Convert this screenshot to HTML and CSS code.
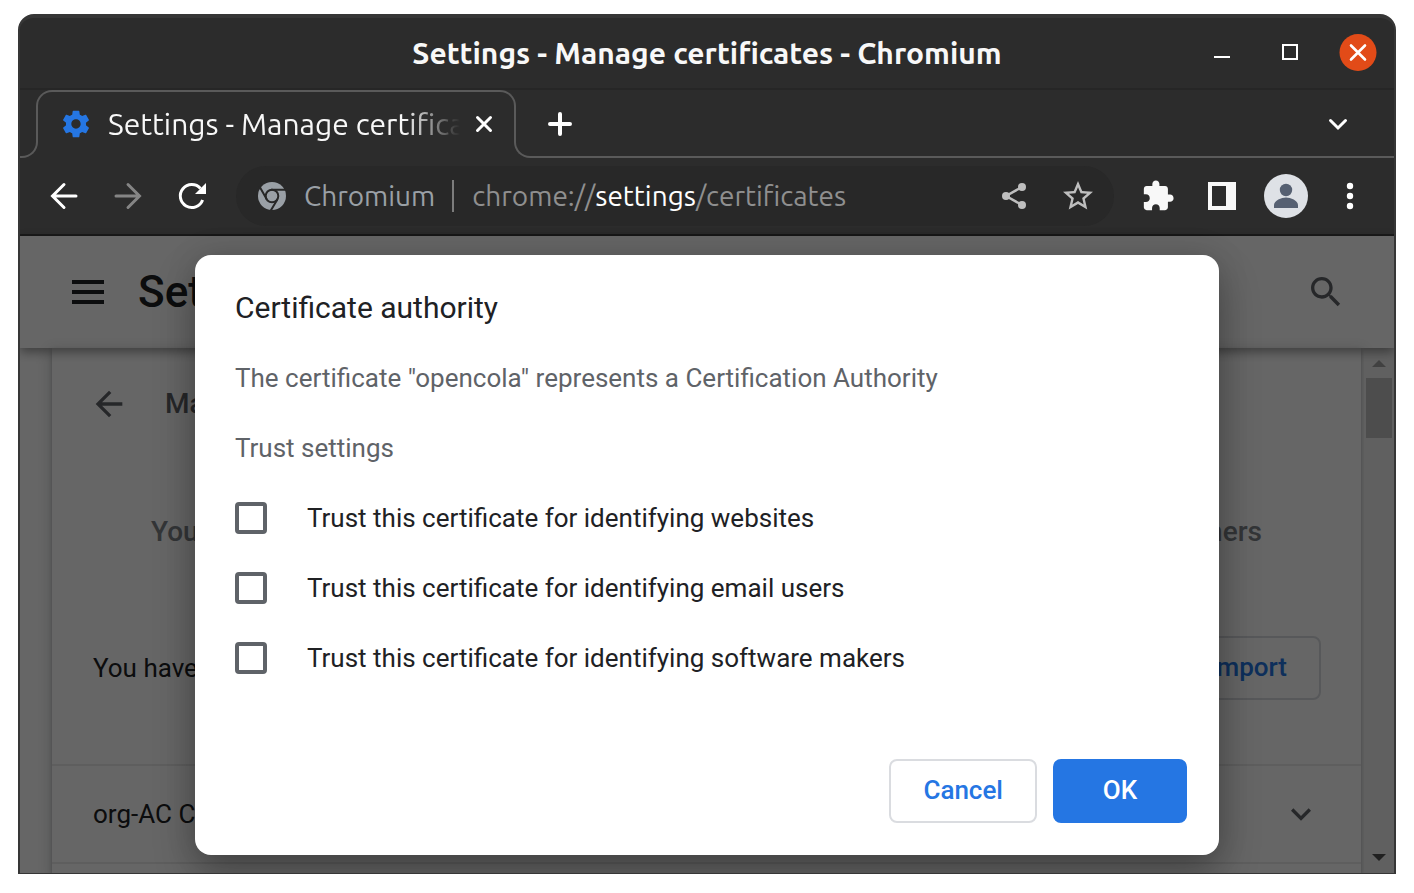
FILE: index.html
```html
<!DOCTYPE html>
<html lang="en">
<head>
<meta charset="utf-8">
<title>Settings - Manage certificates</title>
<link rel="stylesheet" href="styles.css">
</head>
<body>
<div class="window">
  <header class="titlebar">
    <h1 class="titlebar-text">Settings - Manage certificates - Chromium</h1>
    <div class="window-controls">
      <button class="window-button" aria-label="Minimize"><svg width="36" height="36" viewBox="0 0 36 36"><path d="M11 21h16v2H11z" fill="#fff"/></svg></button>
      <button class="window-button" aria-label="Maximize"><svg width="36" height="36" viewBox="0 0 36 36"><path d="M12 10h14v14H12z" fill="none" stroke="#fff" stroke-width="2"/></svg></button>
      <button class="window-button" aria-label="Close window"><svg width="38" height="38" viewBox="0 0 38 38"><circle cx="19" cy="18.500" r="18.500" fill="#e24b18"/><path d="M12 11.500l14 14M26 11.500l-14 14" stroke="#fff" stroke-width="2.600" stroke-linecap="round"/></svg></button>
    </div>
  </header>

  <nav class="tabstrip">
    <div class="tabstrip-start"></div>
    <div class="tab">
      <svg class="tab-icon" width="32" height="32" viewBox="0 0 24 24"><path fill="#2576e3" d="M19.43 12.98c.04-.32.07-.64.07-.98s-.03-.66-.07-.98l2.11-1.65c.19-.15.24-.42.12-.64l-2-3.46c-.12-.22-.39-.3-.61-.22l-2.49 1c-.52-.4-1.08-.73-1.69-.98l-.38-2.65C14.46 2.18 14.25 2 14 2h-4c-.25 0-.46.18-.49.42l-.38 2.65c-.61.25-1.17.59-1.69.98l-2.49-1c-.23-.09-.49 0-.61.22l-2 3.46c-.13.22-.07.49.12.64l2.11 1.65c-.04.32-.07.65-.07.98s.03.66.07.98l-2.11 1.65c-.19.15-.24.42-.12.64l2 3.46c.12.22.39.3.61.22l2.49-1c.52.4 1.08.73 1.69.98l.38 2.65c.03.24.24.42.49.42h4c.25 0 .46-.18.49-.42l.38-2.65c.61-.25 1.17-.59 1.69-.98l2.49 1c.23.09.49 0 .61-.22l2-3.46c.12-.22.07-.49-.12-.64l-2.11-1.65zM12 15.5c-1.93 0-3.5-1.57-3.5-3.5s1.57-3.5 3.5-3.5 3.5 1.57 3.5 3.5-1.57 3.5-3.5 3.5z"/></svg>
      <span class="tab-title">Settings - Manage certificates</span>
      <button class="tab-close" aria-label="Close tab"><svg width="20" height="20" viewBox="0 0 20 20"><path d="M3.500 3.500l13 13M16.500 3.500l-13 13" stroke="#fff" stroke-width="3" stroke-linecap="round"/></svg></button>
    </div>
    <div class="tabstrip-end">
      <button class="strip-button" aria-label="New tab"><svg width="36" height="36" viewBox="0 0 36 36"><path d="M18 8v20M8 18h20" stroke="#fff" stroke-width="4" stroke-linecap="round"/></svg></button>
      <button class="strip-button" aria-label="Search tabs"><svg width="36" height="36" viewBox="0 0 36 36"><path d="M10.500 14.500l7.500 7.500 7.500-7.500" fill="none" stroke="#fff" stroke-width="3" stroke-linecap="round"/></svg></button>
    </div>
  </nav>

  <div class="toolbar">
    <div class="toolbar-nav">
      <button class="tool-button" aria-label="Back"><svg width="32" height="32" viewBox="0 0 32 32"><path d="M16 4.500L4.500 16 16 27.500M5 16h23" fill="none" stroke="#fff" stroke-width="3" stroke-linecap="round"/></svg></button>
      <button class="tool-button" aria-label="Forward" disabled><svg width="32" height="32" viewBox="0 0 32 32"><path d="M16 4.500L27.500 16 16 27.500M27 16H4" fill="none" stroke="#858585" stroke-width="3" stroke-linecap="round"/></svg></button>
      <button class="tool-button" aria-label="Reload"><svg width="32" height="32" viewBox="0 0 32 32"><path d="M26.600 20A11.500 11.500 0 1 1 24.500 8.500" fill="none" stroke="#fff" stroke-width="3"/><path d="M30 3v11H19z" fill="#fff"/></svg></button>
    </div>
    <div class="omnibox">
      <svg class="omnibox-logo" width="28" height="28" viewBox="0 0 28 28">
        <circle cx="14" cy="14" r="14" fill="#9aa0a6"/>
        <circle cx="14" cy="14" r="6.300" fill="none" stroke="#282828" stroke-width="2"/>
        <path d="M13 7.700h15M8.600 17L1.500 4.500M19.500 17.200L12.500 29" fill="none" stroke="#282828" stroke-width="2"/>
      </svg>
      <span class="omnibox-chip">Chromium</span>
      <div class="omnibox-url" role="textbox" contenteditable="true" spellcheck="false" aria-label="Address">chrome://<span class="omnibox-host">settings</span>/certificates</div>
      <button class="tool-button" aria-label="Share"><svg width="32" height="32" viewBox="0 0 32 32"><path d="M24 7L8 16l16 9" fill="none" stroke="#bebebe" stroke-width="2.400"/><circle cx="24" cy="7" r="4" fill="#bebebe"/><circle cx="8" cy="16" r="4" fill="#bebebe"/><circle cx="24" cy="25" r="4" fill="#bebebe"/></svg></button>
      <button class="tool-button" aria-label="Bookmark"><svg width="36" height="36" viewBox="0 0 24 24"><path fill="#bebebe" d="M22 9.240l-7.190-.62L12 2 9.190 8.630 2 9.240l5.460 4.730L5.820 21 12 17.270 18.180 21l-1.630-7.030L22 9.240zM12 15.400l-3.760 2.270 1-4.280-3.320-2.880 4.380-.38L12 6.100l1.710 4.040 4.380.38-3.320 2.880 1 4.280L12 15.400z"/></svg></button>
    </div>
    <div class="toolbar-actions">
      <button class="tool-button" aria-label="Extensions"><svg width="34" height="34" viewBox="0 0 24 24"><path fill="#f8f8f8" d="M20.500 11H19V7c0-1.100-.9-2-2-2h-4V3.500C13 2.120 11.880 1 10.500 1S8 2.120 8 3.500V5H4c-1.100 0-1.990.9-1.990 2v3.800H3.500c1.490 0 2.700 1.210 2.700 2.700s-1.210 2.700-2.700 2.700H2V20c0 1.100.9 2 2 2h3.800v-1.500c0-1.490 1.210-2.700 2.700-2.700 1.490 0 2.700 1.210 2.700 2.700V22H17c1.100 0 2-.9 2-2v-4h1.500c1.380 0 2.500-1.120 2.500-2.500S21.880 11 20.500 11z"/></svg></button>
      <button class="tool-button side-panel" aria-label="Side panel"><svg width="32" height="32" viewBox="0 0 32 32"><path fill="#f8f8f8" fill-rule="evenodd" d="M2 2h28v28H2zM6 6v20h14V6z"/></svg></button>
      <button class="tool-button avatar" aria-label="Profile"><svg width="44" height="44" viewBox="0 0 44 44"><circle cx="22" cy="22" r="22" fill="#dee1e6"/><circle cx="22" cy="16" r="6.200" fill="#566072"/><path d="M10 34v-3c0-4.500 7.500-7.500 12-7.500S34 26.500 34 31v3z" fill="#566072"/></svg></button>
      <button class="tool-button" aria-label="Menu"><svg width="32" height="32" viewBox="0 0 32 32" fill="#fff"><circle cx="16" cy="6" r="3.200"/><circle cx="16" cy="16" r="3.200"/><circle cx="16" cy="26" r="3.200"/></svg></button>
    </div>
  </div>

  <div class="viewport">
    <header class="page-header">
      <button class="page-icon" aria-label="Main menu"><svg width="32" height="24" viewBox="0 0 32 24"><path d="M0 0h32v4H0zM0 10h32v4H0zM0 20h32v4H0z" fill="#202124"/></svg></button>
      <h2 class="page-title">Settings</h2>
      <button class="page-icon page-search" aria-label="Search settings"><svg width="40" height="40" viewBox="0 0 24 24"><path fill="#5f6368" d="M15.500 14h-.79l-.28-.27C15.410 12.590 16 11.110 16 9.500 16 5.910 13.090 3 9.500 3S3 5.910 3 9.500 5.910 16 9.500 16c1.610 0 3.090-.59 4.230-1.570l.27.28v.79l5 4.990L20.490 19l-4.990-5zm-6 0C7.010 14 5 11.990 5 9.500S7.010 5 9.500 5 14 7.010 14 9.500 11.990 14 9.500 14z"/></svg></button>
    </header>
    <div class="page-body">
      <main class="card">
        <div class="card-heading">
          <button class="page-icon" aria-label="Back to security"><svg width="40" height="40" viewBox="0 0 24 24"><path fill="#5f6368" d="M20 11H7.830l5.590-5.590L12 4l-8 8 8 8 1.410-1.410L7.830 13H20v-2z"/></svg></button>
          <h3 class="card-title">Manage certificates</h3>
        </div>
        <div class="cert-tabs">
          <button class="cert-tab">Your certificates</button>
          <button class="cert-tab">Servers</button>
          <button class="cert-tab">Authorities</button>
          <button class="cert-tab">Others</button>
        </div>
        <div class="cert-intro">
          <span>You have certificates on file</span>
          <button class="button">Import</button>
        </div>
        <div class="cert-row">
          <span>org-AC Camerfirma S.A.</span>
          <button class="page-icon" aria-label="Expand"><svg width="40" height="40" viewBox="0 0 24 24"><path fill="#5f6368" d="M16.590 8.590L12 13.170 7.410 8.590 6 10l6 6 6-6z"/></svg></button>
        </div>
        <div class="cert-row"></div>
      </main>
      <div class="scrollbar" aria-hidden="true">
        <svg width="14" height="7" viewBox="0 0 14 7"><path d="M0 7l7-7 7 7z" fill="#a3a3a3"/></svg>
        <div class="scrollbar-thumb"></div>
        <svg width="14" height="7" viewBox="0 0 14 7"><path d="M0 0l7 7 7-7z" fill="#505050"/></svg>
      </div>
    </div>

    <div class="overlay">
      <form class="dialog" role="dialog" aria-labelledby="dialog-title">
        <h2 class="dialog-title" id="dialog-title">Certificate authority</h2>
        <p class="dialog-text">The certificate "opencola" represents a Certification Authority</p>
        <p class="dialog-text">Trust settings</p>
        <label class="option"><input class="checkbox" type="checkbox">Trust this certificate for identifying websites</label>
        <label class="option"><input class="checkbox" type="checkbox">Trust this certificate for identifying email users</label>
        <label class="option"><input class="checkbox" type="checkbox">Trust this certificate for identifying software makers</label>
        <div class="dialog-actions">
          <button class="button" type="button">Cancel</button>
          <button class="button button-primary" type="button">OK</button>
        </div>
      </form>
    </div>
  </div>
</div>
</body>
</html>
```

FILE: styles.css
```css
* {
  box-sizing: border-box;
}

body {
  margin: 0;
  background: #fff;
  font-family: Roboto, sans-serif;
}

h1, h2, h3, p {
  margin: 0;
}

button {
  padding: 0;
  border: 0;
  background: none;
  font: inherit;
}

svg {
  display: block;
  flex: none;
}

.window {
  display: flex;
  flex-direction: column;
  height: calc(100vh - 33px);
  margin: 14px 18px 19px;
  overflow: hidden;
  border: 2px solid #363636;
  border-width: 4px 2px 1px;
  border-radius: 16px 16px 0 0;
  background: #2c2c2c;
}

/* Title bar */

.titlebar {
  display: grid;
  grid-template-columns: 1fr auto 1fr;
  align-items: center;
  flex: none;
  height: 72px;
  padding: 0 17px;
  border-bottom: 2px solid #262626;
}

.titlebar-text {
  grid-column: 2;
  color: #f8f8f8;
  font: bold 30px/40px Ubuntu, "Noto Sans", sans-serif;
}

.window-controls {
  display: flex;
  align-items: center;
  justify-content: flex-end;
  gap: 32px;
}

/* Tab strip */

.tabstrip {
  display: flex;
  flex: none;
  height: 68px;
  color: #f8f8f8;
  font: 30px/36px Ubuntu, "Noto Sans", sans-serif;
}

.tabstrip-start,
.tabstrip-end {
  align-self: flex-end;
  height: 52px;
  border: 0 solid #5a5a5a;
  border-bottom-width: 2px;
}

.tabstrip-start {
  width: 18px;
  margin-right: -2px;
  border-right-width: 2px;
  border-bottom-right-radius: 16px;
}

.tabstrip-end {
  display: flex;
  flex: 1;
  align-items: flex-start;
  justify-content: space-between;
  margin-left: -2px;
  padding: 0 38px 0 26px;
  border-left-width: 2px;
  border-bottom-left-radius: 16px;
}

.tab {
  display: flex;
  align-items: center;
  width: 480px;
  height: 50px;
  padding: 16px 20px 0 22px;
  border: 2px solid #5a5a5a;
  border-bottom: 0;
  border-radius: 16px 16px 0 0;
}

.tab-title {
  flex: 1;
  min-width: 0;
  margin: 0 14px 0 16px;
  overflow: hidden;
  white-space: nowrap;
  mask-image: linear-gradient(to left, transparent, #000 56px);
}

/* Toolbar */

.toolbar {
  display: flex;
  align-items: center;
  flex: none;
  height: 78px;
  padding: 0 28px;
  border-bottom: 2px solid #1a1a1a;
}

.toolbar-nav {
  display: flex;
  gap: 32px;
  margin-right: 28px;
}

.tool-button {
  display: flex;
  align-items: center;
  justify-content: center;
  flex: none;
  width: 32px;
  height: 44px;
}

.omnibox {
  display: flex;
  align-items: center;
  flex: 1;
  min-width: 0;
  height: 60px;
  padding: 0 20px 0 22px;
  border-radius: 30px;
  background: #282828;
  font: 28px/32px Ubuntu, "Noto Sans", sans-serif;
}

.omnibox-chip {
  margin: 0 17px 0 18px;
  color: #9aa0a6;
}

.omnibox-url {
  flex: 1;
  padding-left: 18px;
  border-left: 2px solid #7c7c7c;
  color: #8f8f8f;
  white-space: nowrap;
}

.omnibox-host {
  color: #fff;
}

.omnibox .tool-button + .tool-button {
  margin-left: 32px;
}

.toolbar-actions {
  display: flex;
  align-items: center;
  gap: 26px;
  margin-left: 28px;
}

.side-panel {
  margin-left: 6px;
}

.avatar {
  width: 44px;
}

/* Settings page */

.viewport {
  position: relative;
  display: flex;
  flex-direction: column;
  flex: 1;
  min-height: 0;
  background: #fff;
  color: #202124;
  font-size: 26px;
  line-height: 40px;
}

.page-header {
  position: relative;
  display: flex;
  align-items: center;
  flex: none;
  height: 112px;
  padding: 0 48px 0 52px;
  box-shadow: 0 4px 10px rgba(0, 0, 0, 0.4);
}

.page-title {
  margin-left: 34px;
  font-size: 44px;
  font-weight: 500;
  line-height: 56px;
}

.page-search {
  margin-left: auto;
}

.page-body {
  display: flex;
  flex: 1;
  min-height: 0;
}

.card {
  flex: 1;
  margin: 0 3px 0 32px;
  overflow: hidden;
  box-shadow: 0 2px 4px rgba(60, 64, 67, 0.3), 0 4px 12px 4px rgba(60, 64, 67, 0.15);
}

.card-heading {
  display: flex;
  align-items: center;
  gap: 36px;
  height: 112px;
  padding: 0 37px;
}

.card-title {
  color: #5f6368;
  font-size: 28px;
  font-weight: 500;
}

.cert-tabs {
  display: flex;
  justify-content: space-between;
  height: 144px;
  padding: 0 99px;
}

.cert-tab {
  color: #80868b;
  font-size: 28px;
  font-weight: 500;
}

.cert-intro {
  display: flex;
  align-items: center;
  justify-content: space-between;
  height: 128px;
  margin-bottom: 32px;
  padding: 0 40px 0 41px;
}

.cert-row {
  display: flex;
  align-items: center;
  justify-content: space-between;
  height: 98px;
  padding: 0 40px 0 41px;
  border-top: 2px solid #ebebeb;
}

.scrollbar {
  display: flex;
  flex-direction: column;
  align-items: center;
  width: 30px;
  padding: 12px 0;
  background: #f1f1f1;
}

.scrollbar-thumb {
  width: 26px;
  height: 60px;
  margin: 11px 0 auto;
  background: #c1c1c1;
}

.button {
  height: 64px;
  padding: 0 32px 2px;
  border: 2px solid #dadce0;
  border-radius: 8px;
  color: #2576e3;
  font-weight: 500;
}

.button-primary {
  min-width: 134px;
  border-color: #2576e3;
  background: #2576e3;
  color: #fff;
}

/* Dialog, laid over the dimmed page */

.overlay {
  position: absolute;
  inset: 0;
  display: flex;
  align-items: center;
  justify-content: center;
  background: rgba(0, 0, 0, 0.6);
}

.dialog {
  display: flex;
  flex-direction: column;
  gap: 30px;
  width: 1024px;
  max-width: 90%;
  min-height: 600px;
  padding: 33px 32px 32px 40px;
  border-radius: 16px;
  background: #fff;
  box-shadow: 0 20px 40px rgba(0, 0, 0, 0.3), 0 0 32px rgba(0, 0, 0, 0.12);
}

.dialog-title {
  font-size: 30px;
  font-weight: 400;
}

.dialog-text {
  color: #5f6368;
}

.option {
  display: flex;
  align-items: center;
  gap: 40px;
}

.checkbox {
  flex: none;
  width: 32px;
  height: 32px;
  margin: 0;
  appearance: none;
  border: 4px solid #5f6368;
  border-radius: 4px;
}

.checkbox:checked {
  background: #2576e3;
}

.dialog-actions {
  display: flex;
  justify-content: flex-end;
  gap: 16px;
  margin-top: auto;
}
```
